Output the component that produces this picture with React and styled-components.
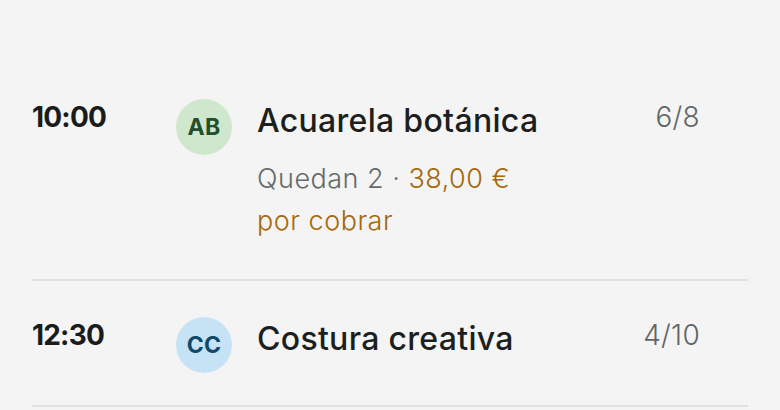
import React from "react";
import styled, { createGlobalStyle } from "styled-components";

const Global = createGlobalStyle`
  html, body { margin: 0; padding: 0; background: #f4f4f4; }
  body { font-family: Inter, "Noto Sans", sans-serif; -webkit-font-smoothing: antialiased; }
`;

const Page = styled.div`
  width: 780px;
  height: 410px;
  background: #f4f4f4;
  padding: 63px 32px 0;
  box-sizing: border-box;
  overflow: hidden;
`;

const List = styled.div`
  display: flex;
  flex-direction: column;
`;

const Row = styled.div`
  display: flex;
  align-items: flex-start;
  padding: 36px 48px 32px 0;
  border-bottom: 2px solid #dde1e0;
`;

const Time = styled.div`
  width: 144px;
  flex: none;
  font-size: 28px;
  line-height: 37px;
  font-weight: 700;
  color: #1a1c1c;
  letter-spacing: -0.8px;
`;

const Avatar = styled.div`
  width: 56px;
  height: 56px;
  flex: none;
  border-radius: 50%;
  background: ${(p) => p.$bg};
  color: ${(p) => p.$fg};
  display: flex;
  align-items: center;
  justify-content: center;
  font-size: 23px;
  font-weight: 700;
  letter-spacing: 0.3px;
`;

const Body = styled.div`
  flex: 1;
  margin-left: 25px;
  display: flex;
  flex-direction: column;
`;

const Title = styled.div`
  font-size: 32px;
  line-height: 43px;
  font-weight: 500;
  color: #1c1f1e;
  letter-spacing: 0.3px;
`;

const Meta = styled.div`
  margin-top: 16px;
  padding-bottom: 5px;
  font-size: 27px;
  line-height: 42px;
  font-weight: 300;
  color: #646a69;
  letter-spacing: 0.5px;
  max-width: 270px;
  display: flex;
  flex-wrap: wrap;
  column-gap: 8px;
`;

const Amount = styled.span`
  color: #a5680c;
`;

const Count = styled.div`
  flex: none;
  font-size: 28px;
  line-height: 37px;
  font-weight: 300;
  color: #5f6564;
  text-align: right;
  letter-spacing: 0.3px;
`;

const sessions = [
  {
    time: "10:00",
    initials: "AB",
    bg: "#cfe8cd",
    fg: "#23502a",
    title: "Acuarela botánica",
    left: "Quedan 2 ·",
    amount: ["38,00 €", "por cobrar"],
    count: "6/8",
  },
  {
    time: "12:30",
    initials: "CC",
    bg: "#c6e3f6",
    fg: "#0e4a6b",
    title: "Costura creativa",
    count: "4/10",
  },
];

export default function App() {
  return (
    <>
      <Global />
      <Page>
        <List>
          {sessions.map((s) => (
            <Row key={s.time}>
              <Time>{s.time}</Time>
              <Avatar $bg={s.bg} $fg={s.fg}>{s.initials}</Avatar>
              <Body>
                <Title>{s.title}</Title>
                {s.left && (
                  <Meta>
                    <span>{s.left}</span>
                    {s.amount.map((a) => (
                      <Amount key={a}>{a}</Amount>
                    ))}
                  </Meta>
                )}
              </Body>
              <Count>{s.count}</Count>
            </Row>
          ))}
        </List>
      </Page>
    </>
  );
}
